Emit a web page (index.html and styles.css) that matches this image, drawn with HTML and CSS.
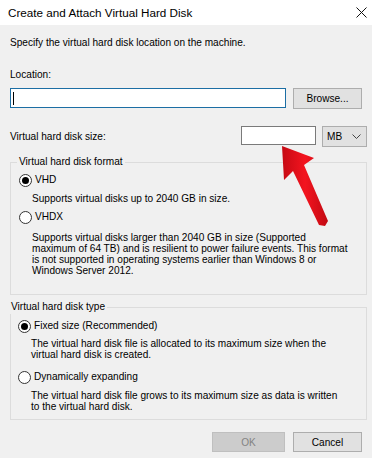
FILE: index.html
```html
<!DOCTYPE html>
<html>
<head>
<meta charset="utf-8">
<link rel="stylesheet" href="styles.css">
</head>
<body>
<div class="window">
  <div class="titlebar">
    <span class="title">Create and Attach Virtual Hard Disk</span>
    <svg class="close" width="11" height="11" viewBox="0 0 11 11"><path d="M0.5 0.5 L10.5 10.5 M10.5 0.5 L0.5 10.5" stroke="#111" stroke-width="1" fill="none"/></svg>
  </div>
  <div class="content">
    <p class="intro">Specify the virtual hard disk location on the machine.</p>
    <div class="label">Location:</div>
    <div class="loc-row">
      <div class="textbox loc"><span class="caret"></span></div>
      <button class="btn browse">Browse...</button>
    </div>
    <div class="size-row">
      <span class="size-label">Virtual hard disk size:</span>
      <div class="textbox size-input"></div>
      <div class="combo"><span>MB</span><svg width="9" height="5" viewBox="0 0 9 5"><path d="M0.5 0.5 L4.5 4.5 L8.5 0.5" stroke="#444" stroke-width="1" fill="none"/></svg></div>
    </div>
    <fieldset class="group g1">
      <legend>Virtual hard disk format</legend>
      <div class="opt first"><span class="radio checked"></span><span>VHD</span></div>
      <p class="desc d1">Supports virtual disks up to 2040 GB in size.</p>
      <div class="opt second"><span class="radio"></span><span>VHDX</span></div>
      <p class="desc d2">Supports virtual disks larger than 2040 GB in size (Supported<br>maximum of 64 TB) and is resilient to power failure events. This format<br>is not supported in operating systems earlier than Windows 8 or<br>Windows Server 2012.</p>
    </fieldset>
    <fieldset class="group g2">
      <legend>Virtual hard disk type</legend>
      <div class="opt first"><span class="radio checked"></span><span>Fixed size (Recommended)</span></div>
      <p class="desc d3">The virtual hard disk file is allocated to its maximum size when the<br>virtual hard disk is created.</p>
      <div class="opt second"><span class="radio"></span><span>Dynamically expanding</span></div>
      <p class="desc d4">The virtual hard disk file grows to its maximum size as data is written<br>to the virtual hard disk.</p>
    </fieldset>
    <div class="actions">
      <button class="btn ok" disabled>OK</button>
      <button class="btn cancel">Cancel</button>
    </div>
  </div>
  <svg class="arrow" width="372" height="458" viewBox="0 0 372 458">
    <defs>
      <linearGradient id="rg" x1="0" y1="0" x2="1" y2="0">
        <stop offset="0" stop-color="#c60a14"/>
        <stop offset="0.5" stop-color="#f3141f"/>
        <stop offset="1" stop-color="#c20a12"/>
      </linearGradient>
    </defs>
    <polygon points="282,146 314,158 304,165 328,221 325,226 319,225 293,171 284,180" fill="url(#rg)"/>
  </svg>
</div>
</body>
</html>
```
FILE: styles.css
```css
* { box-sizing: border-box; }
html, body { margin: 0; padding: 0; }
body {
  font-family: "Liberation Sans", Arial, sans-serif;
  background: #f0f0f0;
  color: #000;
}
.window {
  position: relative;
  width: 372px;
  height: 458px;
  background: #f0f0f0;
  overflow: hidden;
}
.titlebar {
  height: 25px;
  background: #fff;
  display: flex;
  align-items: center;
  justify-content: space-between;
  padding: 0 5px 1px 8px;
}
.title { font-size: 11.7px; color: #000; }
.close { display: block; }
.content {
  padding: 11px 5px 0 10px;
  font-size: 10.1px;
}
.intro { margin: 0; line-height: 14px; }
.label { margin-top: 18px; line-height: 14px; }
.loc-row {
  margin-top: 6px;
  display: flex;
  gap: 7px;
  height: 21px;
}
.textbox { background: #fff; }
.textbox.loc {
  width: 276px;
  height: 20px;
  border: 1px solid #1c6ea4;
  padding: 3px 0 0 2px;
}
.caret { display: block; width: 1px; height: 13px; background: #000; }
.btn {
  font-family: inherit;
  font-size: 10.1px;
  color: #000;
  background: #e1e1e1;
  border: 1px solid #adadad;
  padding: 0;
  margin: 0;
}
.browse { width: 69px; height: 21px; }
.size-row {
  margin-top: 17px;
  display: flex;
  align-items: flex-start;
  height: 21px;
}
.size-label { flex: 1; line-height: 21px; }
.size-input {
  width: 75px;
  height: 19px;
  border: 1px solid #7a7a7a;
}
.combo {
  margin-left: 6px;
  width: 45px;
  height: 21px;
  background: #e1e1e1;
  border: 1px solid #adadad;
  display: flex;
  align-items: center;
  justify-content: space-between;
  padding: 0 5px 0 4px;
  line-height: 19px;
}
.combo svg { display: block; }
.group {
  margin: 8px 0 0;
  border: 1px solid #dcdcdc;
  padding: 0 0 18px 8px;
  min-width: 0;
}
.group legend {
  padding: 0 2px;
  margin-left: -2px;
  line-height: 14px;
}
.g2 { margin-top: 5px; padding: 0 0 7px 7px; }
.g2 legend { margin-left: -9px; }
.opt {
  display: flex;
  align-items: center;
  gap: 3px;
  height: 14px;
  line-height: 14px;
}
.g1 .opt.first { margin-top: 4px; }
.g1 .opt.second { margin-top: 6px; }
.g2 .opt.first { margin-top: 5px; }
.g2 .opt.second { margin-top: 10px; }
.radio {
  width: 13px;
  height: 13px;
  border: 1px solid #333;
  border-radius: 50%;
  background: #fff;
  display: flex;
  align-items: center;
  justify-content: center;
  flex: none;
}
.radio.checked::after {
  content: "";
  width: 7px;
  height: 7px;
  border-radius: 50%;
  background: #000;
}
.desc {
  margin: 0;
  padding-left: 13px;
  line-height: 11px;
  white-space: nowrap;
}
.d1 { margin-top: 6px; }
.d2 { margin-top: 8px; }
.d3 { margin-top: 5px; }
.d4 { margin-top: 6px; }
.actions {
  margin-top: 12px;
  display: flex;
  justify-content: flex-end;
  gap: 8px;
  padding-right: 5px;
}
.ok {
  width: 73px;
  height: 20px;
  background: #cccccc;
  border-color: #bfbfbf;
  color: #838383;
}
.cancel { width: 69px; height: 20px; }
.arrow {
  position: absolute;
  left: 0;
  top: 0;
  pointer-events: none;
}
```
